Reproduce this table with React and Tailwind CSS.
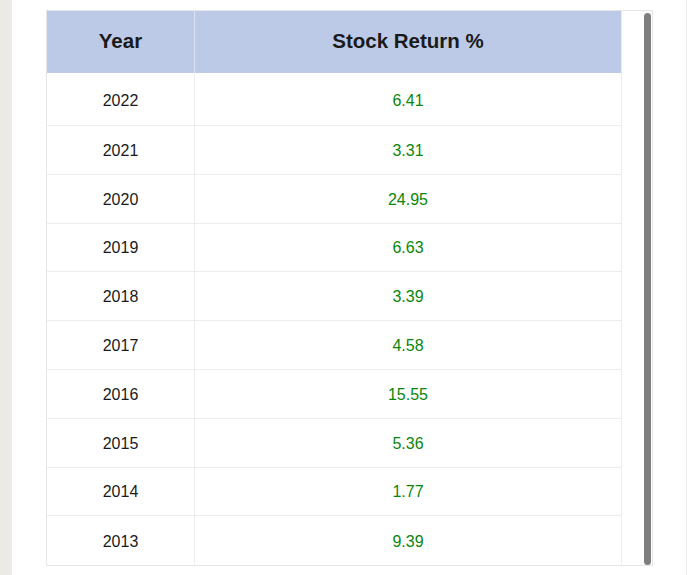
import React from "react";

const rows = [
  ["2022", "6.41"],
  ["2021", "3.31"],
  ["2020", "24.95"],
  ["2019", "6.63"],
  ["2018", "3.39"],
  ["2017", "4.58"],
  ["2016", "15.55"],
  ["2015", "5.36"],
  ["2014", "1.77"],
  ["2013", "9.39"],
];

export default function App() {
  return (
    <div
      className="w-[700px] h-[575px] bg-white flex overflow-hidden"
      style={{ fontFamily: '"Liberation Sans", Arial, sans-serif' }}
    >
      <div className="w-[12px] shrink-0 bg-[#ebeae6]" />
      <div className="w-[675px] shrink-0 border-r border-[#ececec] pt-[10px] pl-[34px]">
        <div className="flex w-[607px] border border-[#e6e6e6]">
          <div className="w-[575px] shrink-0 border-r border-[#ececec]">
            <div className="flex h-[62px] bg-[#bccae8] text-[#1a1a1a] font-bold text-[20.5px]">
              <div className="w-[148px] border-r border-[#dbe2f3] flex items-center justify-center pb-[1px]">
                Year
              </div>
              <div className="flex-1 flex items-center justify-center pb-[1px]">
                Stock Return %
              </div>
            </div>
            {rows.map(([y, v], i) => (
              <div
                key={y}
                className={
                  "flex text-[16px] " +
                  (i === 0 ? "h-[53px] pt-0 " : i === rows.length - 1 ? "h-[48.6px] " : "h-[48.8px] ") +
                  (i === rows.length - 1 ? "" : "border-b border-[#ececec]")
                }
              >
                <div
                  className={
                    "w-[148px] border-r border-[#ececec] flex items-center justify-center text-[#1a1a1a] " +
                    (i === 0 ? "pt-[3px]" : "pt-[2px]")
                  }
                >
                  {y}
                </div>
                <div
                  className={
                    "flex-1 flex items-center justify-center text-[#0b860b] " +
                    (i === 0 ? "pt-[3px]" : "pt-[2px]")
                  }
                >
                  {v}
                </div>
              </div>
            ))}
          </div>
          <div className="flex-1 flex justify-end pr-[1px] pt-[2px]">
            <div className="w-[7px] h-full rounded-full bg-[#7f7f7f]" />
          </div>
        </div>
      </div>
    </div>
  );
}
